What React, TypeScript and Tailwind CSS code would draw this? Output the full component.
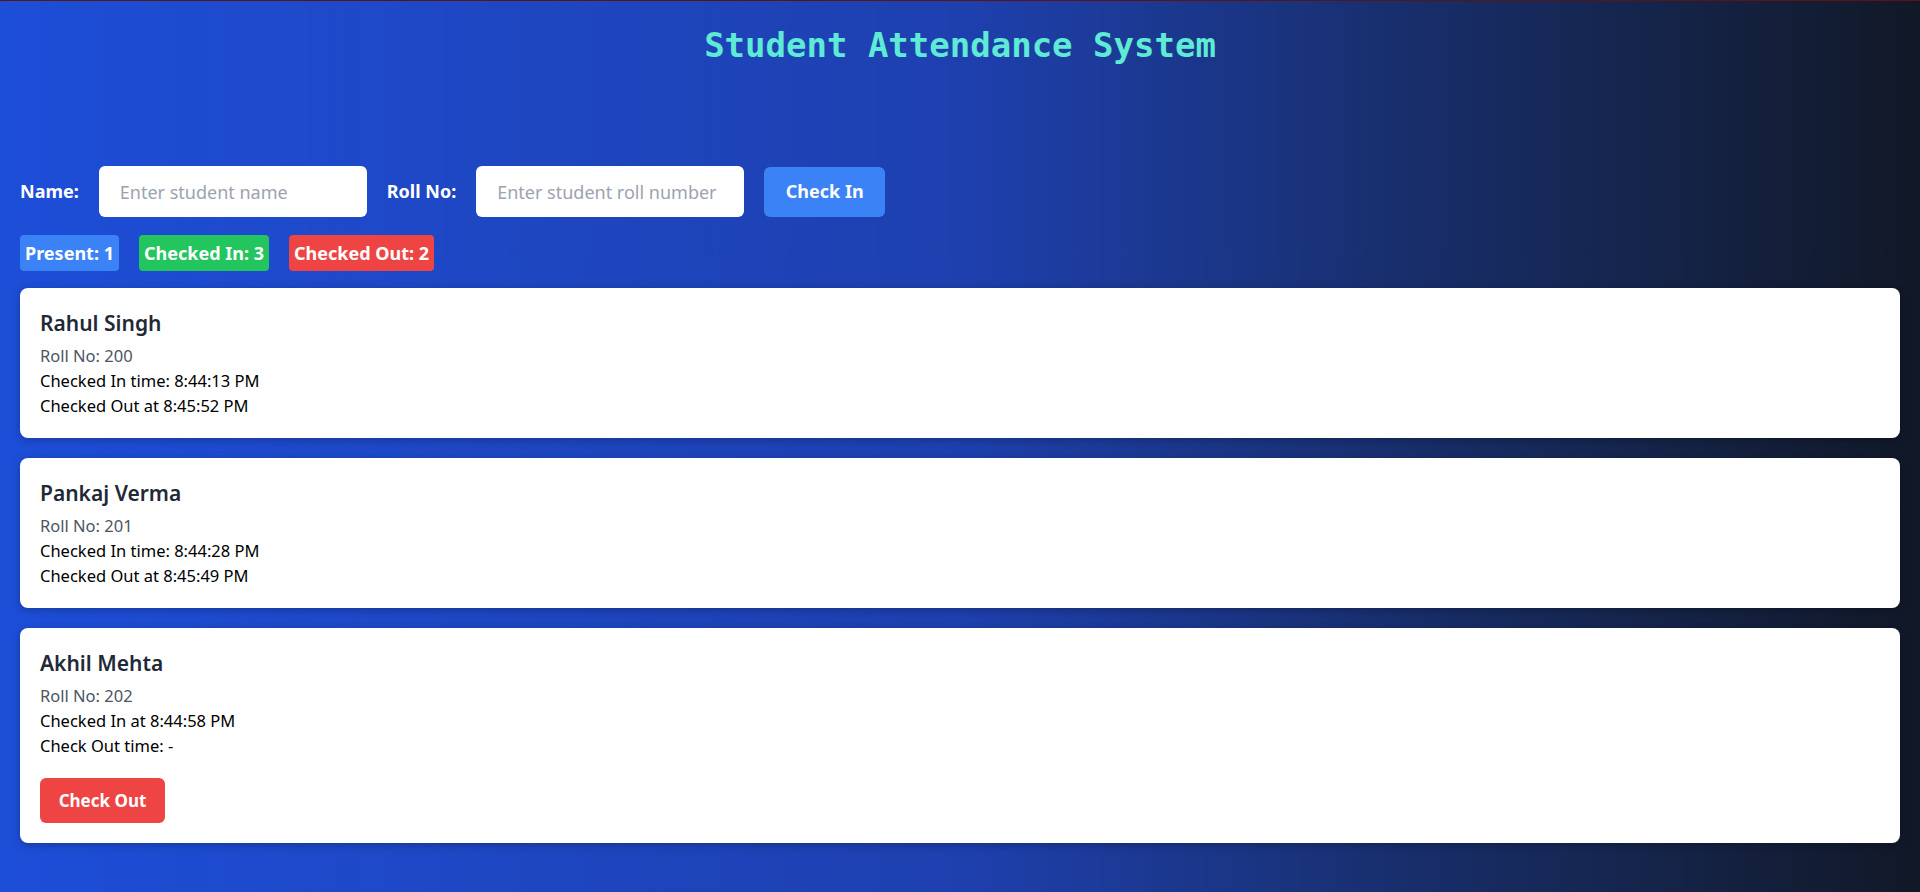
import React from "react";

type Student = {
  name: string;
  roll: string;
  inLabel: string;
  outLabel: string;
  checkedOut: boolean;
};

const students: Student[] = [
  {
    name: "Rahul Singh",
    roll: "200",
    inLabel: "Checked In time: 8:44:13 PM",
    outLabel: "Checked Out at 8:45:52 PM",
    checkedOut: true,
  },
  {
    name: "Pankaj Verma",
    roll: "201",
    inLabel: "Checked In time: 8:44:28 PM",
    outLabel: "Checked Out at 8:45:49 PM",
    checkedOut: true,
  },
  {
    name: "Akhil Mehta",
    roll: "202",
    inLabel: "Checked In at 8:44:58 PM",
    outLabel: "Check Out time: -",
    checkedOut: false,
  },
];

function StudentCard({ s }: { s: Student }) {
  return (
    <div className="bg-white rounded-lg p-5 shadow-[0_2px_8px_rgba(0,0,0,0.25)]">
      <h2 className="text-[21px] leading-[30px] font-semibold text-[#1f2937] mb-[5px]">
        {s.name}
      </h2>
      <p className="text-[16.5px] leading-[25px] text-[#4b5563]">Roll No: {s.roll}</p>
      <p className="text-[16.5px] leading-[25px] text-black">{s.inLabel}</p>
      <p className="text-[16.5px] leading-[25px] text-black">{s.outLabel}</p>
      {!s.checkedOut && (
        <button className="mt-5 h-[45px] w-[125px] rounded-md bg-[#ef4444] text-white font-bold text-[17px]">
          Check Out
        </button>
      )}
    </div>
  );
}

export default function App() {
  return (
    <div className="min-h-screen border-t border-[#5b1414] bg-gradient-to-r from-[#1d4ed8] via-[#1e40af] to-[#111827] p-5 pt-0 font-['Noto_Sans',sans-serif]">
      <h1 className="pt-[24px] text-center font-['DejaVu_Sans_Mono',monospace] font-bold text-[34px] leading-[40px] text-[#5eead4]">
        Student Attendance System
      </h1>

      <div className="mt-[101px] flex items-center gap-5">
        <label className="text-white font-bold text-[18px]">Name:</label>
        <input
          className="h-[51px] w-[268px] rounded-md bg-white px-[21px] text-[18px] text-gray-800 placeholder:text-[#9ca3af] outline-none"
          placeholder="Enter student name"
        />
        <label className="text-white font-bold text-[18px]">Roll No:</label>
        <input
          className="h-[51px] w-[268px] rounded-md bg-white px-[21px] text-[18px] text-gray-800 placeholder:text-[#9ca3af] outline-none"
          placeholder="Enter student roll number"
        />
        <button className="h-[50px] w-[121px] rounded-md bg-[#3b82f6] text-white font-bold text-[18px]">
          Check In
        </button>
      </div>

      <div className="mt-[18px] flex gap-5 text-[18px] font-bold text-white">
        <span className="h-9 flex items-center rounded px-[5px] bg-[#3b82f6]">Present: 1</span>
        <span className="h-9 flex items-center rounded px-[5px] bg-[#22c55e]">Checked In: 3</span>
        <span className="h-9 flex items-center rounded px-[5px] bg-[#ef4444]">Checked Out: 2</span>
      </div>

      <div className="mt-[17px] flex flex-col gap-5">
        {students.map((s) => (
          <StudentCard key={s.roll} s={s} />
        ))}
      </div>
    </div>
  );
}
